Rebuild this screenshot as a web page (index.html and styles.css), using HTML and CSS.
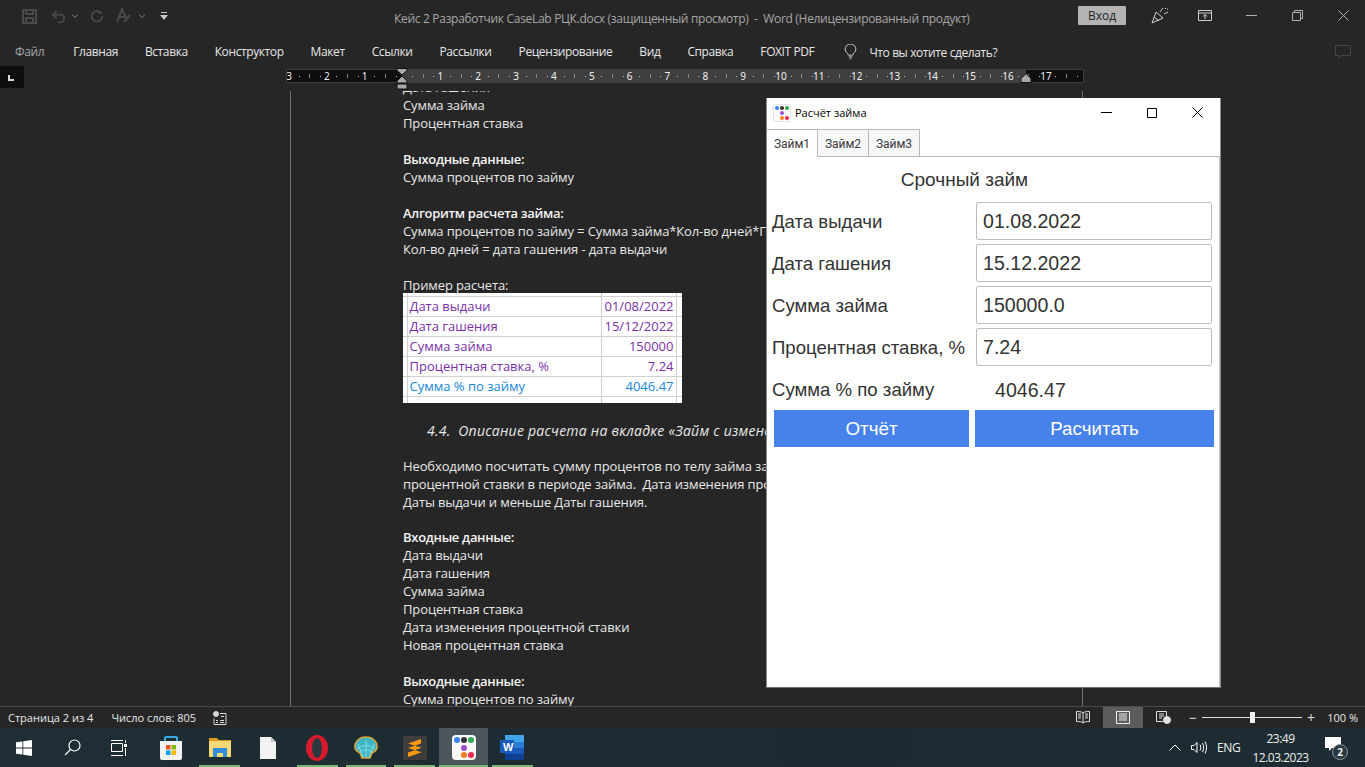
FILE: index.html
```html
<!DOCTYPE html>
<html lang="ru">
<head>
    <meta charset="UTF-8">
    <title>Кейс 2 Разработчик CaseLab РЦК.docx</title>
    <link rel="stylesheet" href="styles.css">
</head>
<body>

<div class="titlebar">
    <div class="qat">
        <svg width="15" height="15" viewBox="0 0 15 15" fill="none" stroke="#4a4a4a" stroke-width="2"><path d="M1 1h13v13H1z"/><path d="M4 1v4h7V1M4 14V9h7v5"/></svg>
        <svg class="undo" width="15" height="15" viewBox="0 0 16 16" fill="none" stroke="#4a4a4a" stroke-width="2"><path d="M6 2L2 6l4 4M2 6h8a4 4 0 0 1 0 8H7"/></svg>
        <svg class="chev" width="6" height="4" viewBox="0 0 6 4" fill="none" stroke="#8a8a8a"><path d="M0 .5l3 3 3-3"/></svg>
        <svg class="redo" width="14" height="14" viewBox="0 0 16 16" fill="none" stroke="#4a4a4a" stroke-width="2"><path d="M11 3a6 6 0 1 0 3 5M10 1v3h4"/></svg>
        <svg class="format" width="18" height="18" viewBox="0 0 18 18" fill="none" stroke="#4a4a4a" stroke-width="2"><path d="M2 15L7 2l4 9M4 10h6M9 15l6-7"/></svg>
        <svg class="chev" width="6" height="4" viewBox="0 0 6 4" fill="none" stroke="#8a8a8a"><path d="M0 .5l3 3 3-3"/></svg>
        <svg class="customize" width="8" height="8" viewBox="0 0 8 8" fill="#c8c8c8"><path d="M1 0h6v1H1zM0 3h8L4 8z"/></svg>
    </div>
    <div class="doc-title">Кейс 2 Разработчик CaseLab РЦК.docx (защищенный просмотр)&nbsp; -&nbsp; Word (Нелицензированный продукт)</div>
    <div class="win-controls">
        <span class="login">Вход</span>
        <svg class="cheer" width="18" height="17" viewBox="0 0 18 17" fill="none" stroke="#d0d0d0"><path d="M1 16L5 5l7 6zM3 10l5 4M9 5l3-4M13 7l4-2M14 2l1-1M16 2h1"/></svg>
        <svg class="ribbon-opt" width="14" height="11" viewBox="0 0 14 11" fill="none" stroke="#d0d0d0"><path d="M.5.500h13v10H.5zM.5 3h13M7 9V4.500M5 6.500l2-2 2 2"/></svg>
        <svg class="win-min" width="11" height="1" viewBox="0 0 11 1"><path d="M0 0h11v1H0z" fill="#b0b0b0"/></svg>
        <svg class="win-max" width="11" height="11" viewBox="0 0 11 11" fill="none" stroke="#b0b0b0"><path d="M.5 2.500h8v8h-8zM2.500 2.500v-2h8v8h-2"/></svg>
        <svg class="win-close" width="11" height="11" viewBox="0 0 11 11" stroke="#b0b0b0"><path d="M.5.500l10 10M10.500.5l-10 10"/></svg>
    </div>
</div>

<div class="ribbon">
    <span class="tab tab-file">Файл</span>
    <span class="tab">Главная</span>
    <span class="tab">Вставка</span>
    <span class="tab">Конструктор</span>
    <span class="tab">Макет</span>
    <span class="tab">Ссылки</span>
    <span class="tab">Рассылки</span>
    <span class="tab">Рецензирование</span>
    <span class="tab">Вид</span>
    <span class="tab">Справка</span>
    <span class="tab">FOXIT PDF</span>
    <svg class="bulb" width="13" height="16" viewBox="0 0 14 18" fill="none" stroke="#e0e0e0"><path d="M4.500 12.500C4 10 1 9 1 6a6 6 0 0 1 12 0c0 3-3 4-3.500 6.500zM5 14.500h4M6 16.500h2"/></svg>
    <span class="tell">Что вы хотите сделать?</span>
    <svg class="comment" width="16" height="15" viewBox="0 0 16 15" fill="none" stroke="#444"><path d="M.5.500h15v10H6l-2 3v-3H.5z"/></svg>
</div>

<div class="ruler-row">
    <div class="ruler-corner"><span class="corner-mark"></span></div>
    <div class="ruler">
        <div class="cell"><b>3</b><i></i><u></u><i></i></div>
        <div class="cell"><b>2</b><i></i><u></u><i></i></div>
        <div class="cell"><b>1</b><i></i><u></u><i></i></div>
        <div class="cell"><b></b><i></i><u></u><i></i></div>
        <div class="cell"><b>1</b><i></i><u></u><i></i></div>
        <div class="cell"><b>2</b><i></i><u></u><i></i></div>
        <div class="cell"><b>3</b><i></i><u></u><i></i></div>
        <div class="cell"><b>4</b><i></i><u></u><i></i></div>
        <div class="cell"><b>5</b><i></i><u></u><i></i></div>
        <div class="cell"><b>6</b><i></i><u></u><i></i></div>
        <div class="cell"><b>7</b><i></i><u></u><i></i></div>
        <div class="cell"><b>8</b><i></i><u></u><i></i></div>
        <div class="cell"><b>9</b><i></i><u></u><i></i></div>
        <div class="cell"><b>10</b><i></i><u></u><i></i></div>
        <div class="cell"><b>11</b><i></i><u></u><i></i></div>
        <div class="cell"><b>12</b><i></i><u></u><i></i></div>
        <div class="cell"><b>13</b><i></i><u></u><i></i></div>
        <div class="cell"><b>14</b><i></i><u></u><i></i></div>
        <div class="cell"><b>15</b><i></i><u></u><i></i></div>
        <div class="cell"><b>16</b><i></i><u></u><i></i></div>
        <div class="cell"><b>17</b><i></i><u></u><i></i></div>
        <svg class="indent-left" width="12" height="22" viewBox="0 0 12 22"><path d="M1 .5h10v2L6 7 1 2.500zM6 8l5 5v2H1v-2zM1 16h10v5H1z" fill="#a8a8a8" stroke="#111"/></svg>
        <svg class="indent-right" width="12" height="10" viewBox="0 0 12 10"><path d="M6 .5l5 5v4H1v-4z" fill="#a8a8a8" stroke="#111"/></svg>
    </div>
</div>

<div class="doc-area">
    <div class="page">
        <div class="page-text">
            <p class="clipped">Дата гашения</p>
            <p>Сумма займа</p>
            <p>Процентная ставка</p>
            <p>&nbsp;</p>
            <p><strong>Выходные данные:</strong></p>
            <p>Сумма процентов по займу</p>
            <p>&nbsp;</p>
            <p><strong>Алгоритм расчета займа:</strong></p>
            <p>Сумма процентов по займу = Сумма займа*Кол-во дней*Процентная ставка</p>
            <p>Кол-во дней = дата гашения - дата выдачи</p>
            <p>&nbsp;</p>
            <p>Пример расчета:</p>
            <table class="sheet">
                <tr class="top"><td></td><td></td><td></td><td></td></tr>
                <tr><td></td><td>Дата выдачи</td><td class="num">01/08/2022</td><td></td></tr>
                <tr><td></td><td>Дата гашения</td><td class="num">15/12/2022</td><td></td></tr>
                <tr><td></td><td>Сумма займа</td><td class="num">150000</td><td></td></tr>
                <tr><td></td><td>Процентная ставка, %</td><td class="num">7.24</td><td></td></tr>
                <tr class="total"><td></td><td>Сумма % по займу</td><td class="num">4046.47</td><td></td></tr>
                <tr class="blank"><td></td><td></td><td></td><td></td></tr>
            </table>
            <p class="heading">4.4.&nbsp; Описание расчета на вкладке «Займ с изменением ставки»</p>
            <p>Необходимо посчитать сумму процентов по телу займа за период с учетом изменения</p>
            <p>процентной ставки в периоде займа.&nbsp; Дата изменения процентной ставки должна быть больше</p>
            <p>Даты выдачи и меньше Даты гашения.</p>
            <p class="short">&nbsp;</p>
            <p><strong>Входные данные:</strong></p>
            <p>Дата выдачи</p>
            <p>Дата гашения</p>
            <p>Сумма займа</p>
            <p>Процентная ставка</p>
            <p>Дата изменения процентной ставки</p>
            <p>Новая процентная ставка</p>
            <p>&nbsp;</p>
            <p><strong>Выходные данные:</strong></p>
            <p>Сумма процентов по займу</p>
        </div>
    </div>
</div>

<div class="statusbar">
    <span class="st-pages">Страница 2 из 4</span>
    <span class="st-words">Число слов: 805</span>
    <svg class="st-macro" width="14" height="14" viewBox="0 0 14 14" fill="none" stroke="#d8d8d8"><circle cx="3" cy="3" r="2.500" fill="#d8d8d8"/><path d="M1 7.500v6h12v-11H7M3 9.500h2M7 9.500h4M3 11.500h2M7 11.500h4M8 5.500h3"/></svg>
    <div class="st-right">
        <span class="view"><svg width="14" height="13" viewBox="0 0 14 13" fill="none" stroke="#e0e0e0"><path d="M7 2C5 .5 3 .5.500.500v10c3 0 4.500 0 6.500 1.500 2-1.500 3.500-1.500 6.500-1.500V.5C11 .5 9 .5 7 2zM7 2v10M2 3h3M2 5h3M2 7h3M9 3h3M9 5h3M9 7h3"/></svg></span>
        <span class="view view-on"><svg width="14" height="13" viewBox="0 0 14 13" fill="none" stroke="#eee"><path d="M.5.500h13v12H.5zM3 3h8M3 5h8M3 7h8M3 9h8"/></svg></span>
        <span class="view"><svg width="15" height="13" viewBox="0 0 15 13" fill="none" stroke="#e0e0e0"><path d="M7 10.500H.5V.5h10V5M3 3h5M3 5h5M3 7h3"/><circle cx="11" cy="9" r="3.500" fill="#e0e0e0"/></svg></span>
        <div class="zoom">
            <span class="zoom-sign">−</span>
            <span class="zoom-track"><span class="zoom-thumb"></span></span>
            <span class="zoom-sign">+</span>
        </div>
        <span class="zoom-val">100 %</span>
    </div>
</div>

<div class="taskbar">
    <span class="tb-item"><svg width="16" height="16" viewBox="0 0 16 16" fill="#fff"><path d="M0 2.300l6.500-.9v6.200H0zM7.300 1.300L16 0v7.600H7.300zM0 8.400h6.500v6.200L0 13.700zM7.300 8.400H16V16l-8.700-1.300z"/></svg></span>
    <span class="tb-item tb-search"><svg width="17" height="17" viewBox="0 0 17 17" fill="none" stroke="#fff" stroke-width="1.200"><circle cx="10.500" cy="6.500" r="5.500"/><path d="M6.500 10.500L1 16"/></svg></span>
    <span class="tb-item tb-tasks"><svg width="16" height="16" viewBox="0 0 16 16" fill="none" stroke="#fff"><path d="M0 .5h12M0 15.500h12M.5 3.500h11v8H.5zM14.500 0v3M14.500 8v8"/><path d="M13 4h3v3h-3z" fill="#fff" stroke="none"/></svg></span>
    <span class="tb-item"><svg width="24" height="24" viewBox="0 0 24 24"><path d="M6 6V2a1 1 0 0 1 1-1h10a1 1 0 0 1 1 1v4" fill="none" stroke="#35a8e0" stroke-width="2"/><path d="M1 5h22v17a2 2 0 0 1-2 2H3a2 2 0 0 1-2-2z" fill="#f2f2f2"/><path d="M7 9h4.500v4.500H7z" fill="#f25022"/><path d="M12.500 9H17v4.500h-4.500z" fill="#7fba00"/><path d="M7 14.500h4.500V19H7z" fill="#00a4ef"/><path d="M12.500 14.500H17V19h-4.500z" fill="#ffb900"/></svg></span>
    <span class="tb-item running"><svg width="22" height="19" viewBox="0 0 22 19"><path d="M0 0h8l2 2h12v16H0z" fill="#d99a1e"/><path d="M0 3h22v16H0z" fill="#f8d775"/><path d="M4 10h14v9h-4v-4H8v4H4z" fill="#2f8fd8"/></svg></span>
    <span class="tb-item"><svg width="16" height="22" viewBox="0 0 16 22"><path d="M0 0h11l5 5v17H0z" fill="#f2f2f2"/><path d="M11 0l5 5h-5z" fill="#c6c6c6"/></svg></span>
    <span class="tb-item running"><svg width="22" height="26" viewBox="0 0 22 26"><ellipse cx="11" cy="13" rx="11" ry="13" fill="#d81b2c"/><ellipse cx="11" cy="13" rx="5" ry="10" fill="#29383e"/></svg></span>
    <span class="tb-item running"><svg width="24" height="23" viewBox="0 0 24 23"><path d="M12 1C5 1 0 6 1 12c.4 2 3 4 5 5l2 5h8l2-5c2-1 4.600-3 5-5 1-6-4-11-11-11z" fill="#3fb6c4" stroke="#d6a63a" stroke-width="1.500"/><path d="M12 21V5M9 21L4 8M15 21l5-13M3 13a13 13 0 0 1 18 0M6 16a9 9 0 0 1 12 0" fill="none" stroke="#86dbe3"/></svg></span>
    <span class="tb-item running"><span class="sublime"><svg width="13" height="18" viewBox="0 0 13 18" fill="#f59a10"><path d="M13 0v4.500L0 9V4.500zM0 9l13 4v-4.500L0 4.500zM13 9v4.500L0 18v-4.500z"/></svg></span></span>
    <span class="tb-item active"><span class="app-icon large"><i class="d1"></i><i class="d2"></i><i class="d3"></i><i class="d4"></i><i class="d5"></i><i class="d6"></i></span></span>
    <span class="tb-item running"><svg width="24" height="25" viewBox="0 0 24 25"><path d="M5 0h18a1 1 0 0 1 1 1v6H5z" fill="#41a5ee"/><path d="M5 7h19v6H5z" fill="#2b7cd3"/><path d="M5 13h19v6H5z" fill="#185abd"/><path d="M5 19h19v5a1 1 0 0 1-1 1H6a1 1 0 0 1-1-1z" fill="#103f91"/><path d="M0 5h14v13H0z" fill="#185abd"/></svg><span class="w-mark">W</span></span>
    <div class="tray">
        <svg class="tray-up" width="12" height="7" viewBox="0 0 12 7" fill="none" stroke="#fff"><path d="M.5 6.500L6 1l5.500 5.500"/></svg>
        <svg class="tray-sound" width="16" height="13" viewBox="0 0 16 13" fill="none" stroke="#fff"><path d="M.5 4.500h2.500l3-3v10l-3-3H.5zM9 3.500c1 2 1 4 0 6M11.500 2c1.500 3 1.500 6 0 9M14 .500c2 4 2 8 0 12"/></svg>
        <span class="lang">ENG</span>
        <div class="clock"><span>23:49</span><span>12.03.2023</span></div>
        <span class="notify"><svg width="16" height="15" viewBox="0 0 16 15" fill="#fff"><path d="M0 0h16v11H7l-3 3v-3H0z"/></svg><span class="notify-count">2</span></span>
    </div>
</div>

<div class="app-window">
    <div class="app-title">
        <span class="app-icon"><i class="d1"></i><i class="d2"></i><i class="d3"></i><i class="d4"></i><i class="d5"></i><i class="d6"></i></span>
        <span class="app-name">Расчёт займа</span>
        <svg class="app-min" width="11" height="1" viewBox="0 0 11 1"><path d="M0 0h11v1H0z" fill="#000"/></svg>
        <svg class="app-max" width="10" height="10" viewBox="0 0 10 10" fill="none" stroke="#000"><path d="M.5.500h9v9h-9z"/></svg>
        <svg class="app-close" width="11" height="11" viewBox="0 0 11 11" stroke="#000"><path d="M.5.500l10 10M10.500.5l-10 10"/></svg>
    </div>
    <div class="app-tabs">
        <span class="app-tab current">Займ1</span>
        <span class="app-tab">Займ2</span>
        <span class="app-tab">Займ3</span>
    </div>
    <div class="app-body">
        <div class="form-title">Срочный займ</div>
        <div class="form-row"><label>Дата выдачи</label><input type="text" value="01.08.2022"></div>
        <div class="form-row"><label>Дата гашения</label><input type="text" value="15.12.2022"></div>
        <div class="form-row"><label>Сумма займа</label><input type="text" value="150000.0"></div>
        <div class="form-row"><label>Процентная ставка, %</label><input type="text" value="7.24"></div>
        <div class="result-row"><span class="result-label">Сумма % по займу</span><span class="result-val">4046.47</span></div>
        <div class="button-row">
            <button class="btn-report">Отчёт</button>
            <button class="btn-calc">Расчитать</button>
        </div>
    </div>
</div>

</body>
</html>
```

FILE: styles.css
```css
* {
    margin: 0;
    padding: 0;
    box-sizing: border-box;
}
html, body {
    height: 767px;
    overflow: hidden;
}
body {
    position: relative;
    display: flex;
    flex-direction: column;
    width: 1365px;
    background: #262626;
    color: #e6e6e6;
    font-family: "Open Sans", "Noto Sans", sans-serif;
    font-size: 12px;
}
svg {
    display: block;
    flex: none;
}

/* word title bar */
.titlebar {
    display: flex;
    align-items: center;
    height: 35px;
    flex: none;
    position: relative;
}
.qat {
    display: flex;
    align-items: center;
    padding-left: 22px;
    margin-top: -3px;
}
.undo { margin-left: 14px; }
.redo { margin-left: 12px; }
.format { margin-left: 11px; }
.chev { margin-left: 6px; }
.customize { margin-left: 15px; }
.doc-title {
    position: absolute;
    left: 394px;
    top: 10px;
    color: #a6a6a6;
    font-size: 12px;
    letter-spacing: -0.31px;
    line-height: 18px;
    white-space: nowrap;
}
.win-controls {
    display: flex;
    align-items: center;
    margin-left: auto;
    height: 35px;
    margin-top: -4px;
}
.login {
    width: 48px;
    height: 19px;
    background: #b3b3b3;
    color: #262626;
    text-align: center;
    line-height: 19px;
    border-radius: 1px;
}
.cheer { margin-left: 25px; }
.ribbon-opt { margin-left: 29px; }
.win-min { margin-left: 34px; }
.win-max { margin-left: 35px; }
.win-close { margin-left: 35px; margin-right: 16px; }

/* ribbon tabs */
.ribbon {
    display: flex;
    align-items: center;
    height: 33px;
    flex: none;
    padding-left: 15px;
    padding-top: 1px;
    white-space: nowrap;
    letter-spacing: -0.4px;
}
.tab {
    color: #e6e6e6;
    margin-right: 27px;
    line-height: 18px;
}
.tab-file { color: #a6a6a6; margin-right: 29px; }
.bulb { margin: 0 0 0 3px; }
.tell { margin-left: 12px; }
.comment { margin-left: auto; margin-right: 14px; }

/* ruler */
.ruler-row {
    display: flex;
    height: 23px;
    flex: none;
    position: relative;
}
.ruler-corner {
    width: 24px;
    height: 22px;
    margin-top: -2px;
    background: #0e0e0e;
}
.corner-mark {
    display: block;
    width: 6px;
    height: 6px;
    margin: 9px 0 0 8px;
    border-left: 2px solid #ddd;
    border-bottom: 2px solid #ddd;
}
.ruler {
    position: relative;
    display: flex;
    width: 796px;
    height: 12px;
    margin: 2px 0 0 263px;
    padding-left: 2px;
    background: linear-gradient(90deg, #0e0e0e 115px, #3f3f3f 115px, #3f3f3f 739px, #0e0e0e 739px);
    outline: 1px solid #3e3e3e;
}
.cell {
    display: flex;
    align-items: center;
    justify-content: space-between;
    flex: none;
    width: 37.85px;
    height: 12px;
    padding-right: 6px;
}
.cell b {
    width: 0;
    display: flex;
    justify-content: center;
    font-weight: 400;
    font-size: 10px;
    line-height: 12px;
    color: #efefef;
    font-family: "Noto Sans", sans-serif;
}
.cell i {
    width: 1px;
    height: 1px;
    background: #bbb;
}
.cell u {
    width: 1px;
    height: 4px;
    background: #888;
}
.indent-left {
    position: absolute;
    left: 109px;
    top: -2px;
}
.indent-right {
    position: absolute;
    left: 733px;
    top: 3px;
}

/* document page */
.doc-area {
    flex: 1;
    min-height: 0;
    overflow: hidden;
    position: relative;
}
.page {
    margin-left: 290px;
    width: 793px;
    height: 100%;
    border-left: 1px solid #6e6e6e;
    border-right: 1px solid #6e6e6e;
    overflow: hidden;
}
.page-text {
    margin-top: -13px;
    padding-left: 112px;
    font-size: 13px;
    line-height: 18px;
    letter-spacing: -0.12px;
    color: #e8e8e8;
    white-space: nowrap;
}
.page-text strong {
    font-weight: 600;
    letter-spacing: -0.3px;
    color: #f4f4f4;
}
.short { height: 17px; }
.heading {
    font-style: italic;
    font-size: 14px;
    letter-spacing: 0.25px;
    padding-left: 24px;
    margin: 19px 0 17px;
}
.sheet {
    width: 279px;
    margin-top: -1px;
    background: #fff;
    border-collapse: collapse;
    color: #7a2fa8;
    table-layout: fixed;
    letter-spacing: 0;
}
.sheet td {
    height: 20px;
    border-bottom: 1px solid #d0d0d0;
    border-right: 1px solid #d0d0d0;
    padding: 0 0 0 2px;
    line-height: 18px;
    font-size: 13px;
}
.sheet td:nth-child(1) { width: 4px; padding: 0; }
.sheet td:nth-child(2) { width: 194px; }
.sheet td:nth-child(3) { width: 75px; }
.sheet td:nth-child(4) { width: 6px; padding: 0; border-right: 0; }
.sheet .num { text-align: right; padding: 0 2px 0 0; }
.sheet .total { color: #1787d8; }
.sheet .top td { height: 3px; line-height: 0; }
.sheet .blank td { height: 7px; line-height: 0; border-bottom: 0; }

/* status bar */
.statusbar {
    display: flex;
    align-items: center;
    height: 22px;
    flex: none;
    font-size: 11px;
    border-top: 1px solid #4a4a4a;
    background: #262626;
}
.st-pages { margin-left: 8px; }
.st-words { margin-left: 18px; }
.st-macro { margin-left: 17px; }
.st-right {
    display: flex;
    align-items: center;
    height: 100%;
    margin-left: auto;
}
.view {
    display: flex;
    align-items: center;
    justify-content: center;
    width: 40px;
    height: 21px;
}
.view-on { background: #5c5c5c; }
.zoom {
    display: flex;
    align-items: center;
    margin-left: 5px;
    color: #ddd;
}
.zoom-sign {
    width: 10px;
    text-align: center;
    font-size: 14px;
    line-height: 14px;
}
.zoom-track {
    position: relative;
    display: block;
    width: 100px;
    height: 1px;
    margin: 0 4px;
    background: #e0e0e0;
}
.zoom-thumb {
    position: absolute;
    left: 48px;
    top: -5px;
    width: 5px;
    height: 11px;
    background: #f0f0f0;
}
.zoom-val {
    width: 49px;
    text-align: right;
    padding-right: 7px;
}

/* windows taskbar */
.taskbar {
    display: flex;
    align-items: center;
    height: 39px;
    flex: none;
    background: linear-gradient(90deg, #1f2d34, #1c2b31 60%, #1d2c33);
}
.tb-item {
    position: relative;
    display: flex;
    align-items: center;
    justify-content: center;
    flex: none;
    width: 48.800px;
    height: 39px;
}
.tb-search svg { margin-left: -2px; }
.tb-tasks svg { margin-left: -5px; }
.tb-item.running::after,
.tb-item.active::after {
    content: "";
    position: absolute;
    left: 4px;
    right: 4px;
    bottom: 0;
    height: 2px;
    background: #76b96f;
}
.tb-item.active { background: #4d565b; }
.tb-item.active::after { left: 0; right: 0; }
.sublime {
    display: flex;
    align-items: center;
    justify-content: center;
    width: 24px;
    height: 24px;
    background: #3d3d3d;
    border-radius: 2px;
}
.w-mark {
    position: absolute;
    left: 15px;
    top: 13px;
    color: #fff;
    font: 700 11px "Liberation Sans", sans-serif;
}
.tray {
    display: flex;
    align-items: center;
    margin-left: auto;
    height: 39px;
    color: #f0f0f0;
}
.tray-sound { margin-left: 10px; }
.lang {
    width: 23px;
    margin-left: 10px;
    letter-spacing: -0.4px;
}
.clock {
    display: flex;
    flex-direction: column;
    align-items: center;
    width: 53px;
    margin-left: 14px;
    line-height: 19px;
    font-size: 12px;
    letter-spacing: -0.5px;
}
.notify {
    position: relative;
    display: block;
    width: 16px;
    height: 15px;
    margin: -6px 24px 0 18px;
}
.notify-count {
    position: absolute;
    left: 7px;
    top: 7px;
    width: 16px;
    height: 16px;
    border-radius: 50%;
    background: #2a3a40;
    border: 1px solid #8a9498;
    text-align: center;
    font-weight: 700;
    font-size: 10px;
    line-height: 14px;
}

/* the loan calculator window */
.app-window {
    position: absolute;
    left: 766px;
    top: 98px;
    width: 455px;
    height: 590px;
    background: #fff;
    border: 1px solid #8c8c8c;
    border-top: 0;
    border-bottom-color: #6f6f6f;
    color: #333;
    font-family: "Liberation Sans", Arial, sans-serif;
}
.app-title {
    display: flex;
    align-items: center;
    height: 31px;
    padding: 0 0 2px 7px;
    color: #000;
}
.app-icon {
    position: relative;
    display: block;
    flex: none;
    width: 16px;
    height: 16px;
    background: #fafafa;
    box-shadow: 0 0 0 1px #e4e4e4;
    border-radius: 2px;
}
.app-icon i {
    position: absolute;
    width: 4px;
    height: 4px;
    border-radius: 50%;
}
.app-icon .d1 { left: 1px; top: 1px; background: #3b82f0; }
.app-icon .d2 { left: 6px; top: 1px; background: #333; }
.app-icon .d3 { left: 11px; top: 1px; background: #2fa84f; }
.app-icon .d4 { left: 6px; top: 6px; background: #9a52c8; }
.app-icon .d5 { left: 6px; top: 11px; background: #f57c20; }
.app-icon .d6 { left: 11px; top: 11px; background: #ee2a50; }
.app-icon.large {
    width: 24px;
    height: 25px;
    background: #f7f7f7;
    box-shadow: none;
    border-radius: 4px;
}
.app-icon.large i { width: 6px; height: 6px; }
.app-icon.large .d1 { left: 2px; top: 2px; }
.app-icon.large .d2 { left: 9px; top: 2px; }
.app-icon.large .d3 { left: 16px; top: 2px; }
.app-icon.large .d4 { left: 9px; top: 10px; }
.app-icon.large .d5 { left: 9px; top: 17px; }
.app-icon.large .d6 { left: 16px; top: 17px; }
.app-name {
    margin-left: 5px;
    font-family: "Open Sans", sans-serif;
    font-size: 11px;
}
.app-min { margin-left: auto; }
.app-max { margin-left: 35px; }
.app-close { margin-left: 35px; margin-right: 17px; }
.app-tabs {
    display: flex;
    height: 28px;
    border-bottom: 1px solid #b8b8b8;
    font-family: Roboto, sans-serif;
}
.app-tab {
    width: 51px;
    height: 28px;
    background: #f6f7f9;
    border: 1px solid #b8b8b8;
    border-left: 0;
    text-align: center;
    font-size: 12px;
    line-height: 29px;
    color: #3a3a3a;
}
.app-tab.current {
    background: #fff;
    border-bottom: 0;
}
.app-body {
    padding: 0 0 0 5px;
    border-right: 1px solid #c4c4c4;
    height: 530px;
    font-size: 18.6px;
}
.form-title {
    height: 46px;
    padding-right: 62px;
    text-align: center;
    font-size: 19px;
    line-height: 46px;
    margin-bottom: -1px;
}
.form-row {
    display: flex;
    align-items: center;
    justify-content: space-between;
    height: 38px;
    margin-bottom: 4px;
    padding-right: 7px;
}
.form-row input {
    width: 236px;
    height: 38px;
    padding-left: 6px;
    border: 1px solid #bdbdbd;
    border-radius: 2px;
    color: #333;
    font: 19.6px "Liberation Sans", Arial, sans-serif;
    outline: none;
}
.form-row label { white-space: nowrap; padding-top: 2px; }
.result-row {
    display: flex;
    align-items: center;
    height: 40px;
}
.result-label { width: 223px; }
.result-val { font-size: 19.6px; }
.button-row {
    display: flex;
    gap: 6px;
    padding: 0 2px;
}
.button-row button {
    flex: none;
    height: 37px;
    border: none;
    background: #4682ea;
    color: #fff;
    font: 18.8px "Liberation Sans", Arial, sans-serif;
}
.btn-report { width: 195px; }
.btn-calc { width: 239px; }
```
